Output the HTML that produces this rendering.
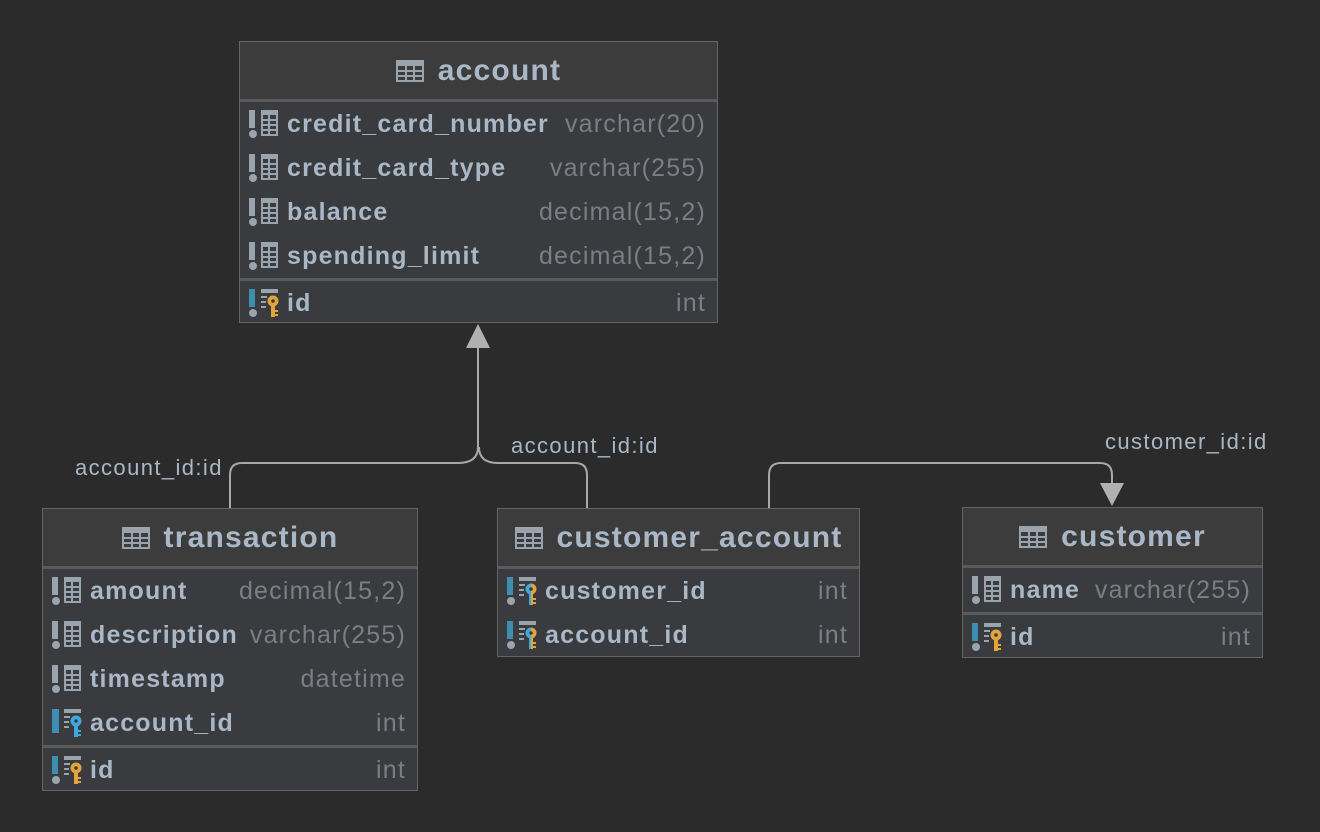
<!DOCTYPE html>
<html><head><meta charset="utf-8"><style>
body{margin:0;width:1320px;height:832px;background:#2b2b2b;overflow:hidden;font-family:"Liberation Sans",sans-serif;position:relative}
.t{position:absolute;background:#393b3e;border:1px solid #646464;box-sizing:border-box}
.h{height:57px;background:#3c3c3c;border-bottom:3px solid #5a5a5a;display:flex;align-items:center;justify-content:center;color:#a9b7c6;font-weight:bold;font-size:30px;letter-spacing:1.2px}
.h svg{margin-right:14px}
.r{height:44px;display:flex;align-items:center;padding:0 12px 0 9px;font-size:25px;letter-spacing:1.2px}
.r svg{flex:none;margin-right:8px}
.n{color:#a9b7c6;font-weight:bold}
.ty{color:#7b7e82;margin-left:auto;padding-left:8px;margin-right:-1px}
.sep{border-top:3px solid #5a5a5a}
.lbl{position:absolute;color:#a9b7c6;font-size:22px;letter-spacing:1.4px}
</style></head><body>
<svg width="0" height="0" style="position:absolute">
<defs>
<symbol id="tb" viewBox="0 0 28 22"><rect x="0" y="0" width="28" height="22" fill="#9aa4ae"/><g fill="#3c3c3c"><rect x="2" y="6" width="7" height="4"/><rect x="11" y="6" width="6" height="4"/><rect x="19" y="6" width="7" height="4"/><rect x="2" y="12" width="7" height="3"/><rect x="11" y="12" width="6" height="3"/><rect x="19" y="12" width="7" height="3"/><rect x="2" y="17" width="7" height="3"/><rect x="11" y="17" width="6" height="3"/><rect x="19" y="17" width="7" height="3"/></g></symbol>
<symbol id="col" viewBox="0 0 30 30"><rect x="0" y="1" width="6" height="18" fill="#9aa4ae"/><circle cx="4" cy="25" r="4" fill="#9aa4ae"/><rect x="12" y="1" width="17" height="26" fill="#9aa4ae"/><g fill="#393b3e"><rect x="14" y="6" width="5" height="4"/><rect x="21" y="6" width="6" height="4"/><rect x="14" y="12" width="5" height="3"/><rect x="21" y="12" width="6" height="3"/><rect x="14" y="17" width="5" height="3"/><rect x="21" y="17" width="6" height="3"/><rect x="14" y="22" width="5" height="3"/><rect x="21" y="22" width="6" height="3"/></g></symbol>
<symbol id="pk" viewBox="0 0 30 30"><rect x="0" y="1" width="6" height="18" fill="#3d8eb0"/><circle cx="4" cy="25" r="4" fill="#9aa4ae"/><rect x="12" y="1" width="17" height="4" fill="#9aa4ae"/><rect x="12" y="8" width="6" height="2" fill="#9aa4ae"/><rect x="12" y="13" width="5" height="2" fill="#9aa4ae"/><rect x="12" y="18" width="5" height="2" fill="#9aa4ae"/><circle cx="24" cy="13" r="5.5" fill="#e2a53c"/><circle cx="24" cy="13" r="1.8" fill="#393b3e"/><rect x="22" y="17" width="4" height="12" fill="#e2a53c"/><rect x="26" y="22" width="3" height="2" fill="#e2a53c"/><rect x="26" y="26" width="3" height="2" fill="#e2a53c"/></symbol>
<symbol id="fk" viewBox="0 0 30 30"><rect x="0" y="1" width="7" height="24" fill="#3d8eb0"/><rect x="12" y="1" width="17" height="4" fill="#9aa4ae"/><rect x="12" y="8" width="6" height="2" fill="#9aa4ae"/><rect x="12" y="13" width="5" height="2" fill="#9aa4ae"/><rect x="12" y="18" width="5" height="2" fill="#9aa4ae"/><circle cx="24" cy="13" r="5.5" fill="#3fa8dc"/><circle cx="24" cy="13" r="1.8" fill="#393b3e"/><rect x="22" y="17" width="4" height="12" fill="#3fa8dc"/><rect x="26" y="22" width="3" height="2" fill="#3fa8dc"/><rect x="26" y="26" width="3" height="2" fill="#3fa8dc"/></symbol>
<symbol id="pf" viewBox="0 0 30 30"><rect x="0" y="1" width="6" height="18" fill="#3d8eb0"/><circle cx="4" cy="25" r="4" fill="#9aa4ae"/><rect x="12" y="1" width="17" height="4" fill="#9aa4ae"/><rect x="12" y="8" width="6" height="2" fill="#9aa4ae"/><rect x="12" y="13" width="5" height="2" fill="#9aa4ae"/><rect x="12" y="18" width="5" height="2" fill="#9aa4ae"/><path d="M24 7.5a5.5 5.5 0 0 0 0 11z" fill="#3fa8dc"/><path d="M24 7.5a5.5 5.5 0 0 1 0 11z" fill="#e2a53c"/><circle cx="24" cy="13" r="1.8" fill="#393b3e"/><rect x="22" y="17" width="2" height="12" fill="#3fa8dc"/><rect x="24" y="17" width="2" height="12" fill="#e2a53c"/><rect x="26" y="22" width="3" height="2" fill="#e2a53c"/><rect x="26" y="26" width="3" height="2" fill="#e2a53c"/></symbol>
</defs></svg>

<svg style="position:absolute;left:0;top:0" width="1320" height="832">
<g fill="none" stroke="#a8a8a8" stroke-width="2">
<path d="M230 508V475Q230 463 242 463H458Q478 463 478 447V346"/>
<path d="M587 508V475Q587 463 575 463H498Q479 463 479 447"/>
<path d="M769 508V475Q769 463 781 463H1100Q1112 463 1112 475V485"/>
</g>
<polygon points="478,324 466,348 490,348" fill="#b0b0b0"/>
<polygon points="1112,506 1100,483 1124,483" fill="#b0b0b0"/>
</svg>

<div class="lbl" style="left:75px;top:455px">account_id:id</div>
<div class="lbl" style="left:511px;top:433px">account_id:id</div>
<div class="lbl" style="left:1105px;top:429px">customer_id:id</div>

<div class="t" style="left:239px;top:41px;width:479px;height:282px">
<div class="h"><svg width="28" height="22"><use href="#tb"/></svg>account</div>
<div class="r"><svg width="30" height="30"><use href="#col"/></svg><span class="n">credit_card_number</span><span class="ty">varchar(20)</span></div>
<div class="r"><svg width="30" height="30"><use href="#col"/></svg><span class="n">credit_card_type</span><span class="ty">varchar(255)</span></div>
<div class="r"><svg width="30" height="30"><use href="#col"/></svg><span class="n">balance</span><span class="ty">decimal(15,2)</span></div>
<div class="r"><svg width="30" height="30"><use href="#col"/></svg><span class="n">spending_limit</span><span class="ty">decimal(15,2)</span></div>
<div class="r sep"><svg width="30" height="30"><use href="#pk"/></svg><span class="n">id</span><span class="ty">int</span></div>
</div>

<div class="t" style="left:42px;top:508px;width:376px;height:283px">
<div class="h"><svg width="28" height="22"><use href="#tb"/></svg>transaction</div>
<div class="r"><svg width="30" height="30"><use href="#col"/></svg><span class="n">amount</span><span class="ty">decimal(15,2)</span></div>
<div class="r"><svg width="30" height="30"><use href="#col"/></svg><span class="n">description</span><span class="ty">varchar(255)</span></div>
<div class="r"><svg width="30" height="30"><use href="#col"/></svg><span class="n">timestamp</span><span class="ty">datetime</span></div>
<div class="r"><svg width="30" height="30"><use href="#fk"/></svg><span class="n">account_id</span><span class="ty">int</span></div>
<div class="r sep"><svg width="30" height="30"><use href="#pk"/></svg><span class="n">id</span><span class="ty">int</span></div>
</div>

<div class="t" style="left:497px;top:508px;width:363px;height:149px">
<div class="h"><svg width="28" height="22"><use href="#tb"/></svg>customer_account</div>
<div class="r"><svg width="30" height="30"><use href="#pf"/></svg><span class="n">customer_id</span><span class="ty">int</span></div>
<div class="r"><svg width="30" height="30"><use href="#pf"/></svg><span class="n">account_id</span><span class="ty">int</span></div>
</div>

<div class="t" style="left:962px;top:507px;width:301px;height:151px">
<div class="h"><svg width="28" height="22"><use href="#tb"/></svg>customer</div>
<div class="r"><svg width="30" height="30"><use href="#col"/></svg><span class="n">name</span><span class="ty">varchar(255)</span></div>
<div class="r sep"><svg width="30" height="30"><use href="#pk"/></svg><span class="n">id</span><span class="ty">int</span></div>
</div>
</body></html>
